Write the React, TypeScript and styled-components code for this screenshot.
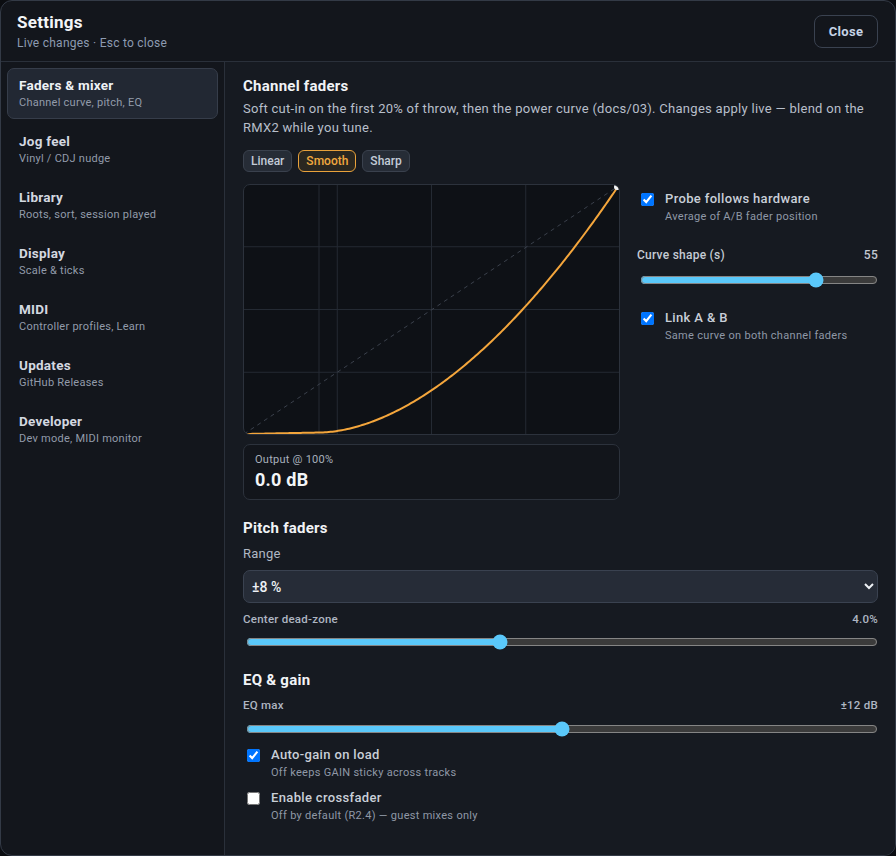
import React from "react";
import styled, { createGlobalStyle } from "styled-components";

const FONT = `"Roboto", "Noto Sans", "DejaVu Sans", sans-serif`;

const Global = createGlobalStyle`
  html, body { margin: 0; padding: 0; background: #0b0d11; }
  body { font-family: ${FONT}; -webkit-font-smoothing: antialiased; letter-spacing: 0.25px; }
  * { box-sizing: border-box; }
`;

const Modal = styled.div`
  width: 896px;
  height: 856px;
  display: flex;
  flex-direction: column;
  background: #13161c;
  border: 1px solid #333a46;
  border-radius: 12px;
  overflow: hidden;
  color: #e8ebf0;
`;

const Header = styled.header`
  height: 61px;
  flex: none;
  display: flex;
  align-items: center;
  justify-content: space-between;
  padding: 0 17px 0 16px;
  border-bottom: 1px solid #2a303a;
`;

const TitleBlock = styled.div`
  display: flex;
  flex-direction: column;
`;

const Title = styled.h1`
  margin: 0;
  font-size: 17px;
  line-height: 20px;
  font-weight: 700;
  color: #f3f5f8;
`;

const Subtitle = styled.div`
  margin-top: 4px;
  font-size: 12px;
  line-height: 15px;
  color: #8d9bb1;
`;

const CloseButton = styled.button`
  width: 64px;
  height: 33px;
  background: transparent;
  border: 1px solid #3a4250;
  border-radius: 8px;
  color: #c6d3e6;
  font-family: ${FONT};
  font-size: 13px;
  font-weight: 700;
  letter-spacing: 0.3px;
  cursor: pointer;
`;

const Body = styled.div`
  flex: 1;
  display: flex;
  min-height: 0;
`;

const Sidebar = styled.nav`
  width: 224px;
  flex: none;
  padding: 6px;
  border-right: 1px solid #2a303a;
  display: flex;
  flex-direction: column;
  gap: 5px;
`;

const NavItem = styled.div<{ $active?: boolean }>`
  padding: 8px 11px;
  border-radius: 7px;
  border: 1px solid ${(p) => (p.$active ? "#363d4a" : "transparent")};
  background: ${(p) => (p.$active ? "#222833" : "transparent")};
`;

const NavTitle = styled.div<{ $active?: boolean }>`
  font-size: 13.5px;
  line-height: 17px;
  font-weight: 700;
  color: ${(p) => (p.$active ? "#eef1f5" : "#d3d8e0")};
`;

const NavSub = styled.div`
  margin-top: 1px;
  font-size: 11px;
  line-height: 15px;
  color: #929baa;
`;

const Content = styled.main`
  flex: 1;
  min-width: 0;
  padding: 14px 17px 0 18px;
  background: #161a21;
  display: flex;
  flex-direction: column;
`;

const SectionTitle = styled.h2<{ $mt?: number }>`
  margin: ${(p) => p.$mt ?? 0}px 0 0;
  font-size: 15px;
  line-height: 20px;
  font-weight: 700;
  color: #f1f3f6;
`;

const Description = styled.p`
  margin: 3px 0 0;
  font-size: 13px;
  line-height: 19px;
  letter-spacing: 0.28px;
  color: #b8bfca;
`;

const Segmented = styled.div`
  display: flex;
  gap: 6px;
  margin-top: 13px;
`;

const SegButton = styled.button<{ $active?: boolean }>`
  height: 22px;
  padding: 0 7px;
  border-radius: 6px;
  font-family: ${FONT};
  font-size: 12px;
  font-weight: 500;
  letter-spacing: 0;
  border: 1px solid ${(p) => (p.$active ? "#e9a23b" : "#3a414d")};
  background: ${(p) => (p.$active ? "#2a2720" : "#262c36")};
  color: ${(p) => (p.$active ? "#f2a93f" : "#c3cbd7")};
`;

const CurveGrid = styled.div`
  display: grid;
  grid-template-columns: 377px 1fr;
  column-gap: 17px;
  margin-top: 12px;
`;

const ChartColumn = styled.div`
  display: flex;
  flex-direction: column;
  gap: 9px;
`;

const ChartBox = styled.div`
  height: 251px;
  border: 1px solid #2c323c;
  border-radius: 7px;
  background: #0e1116;
  overflow: hidden;
  svg { display: block; }
`;

const OutputBox = styled.div`
  height: 56px;
  border: 1px solid #2c323c;
  border-radius: 7px;
  background: #12151b;
  padding: 7px 11px;
`;

const OutputLabel = styled.div`
  font-size: 11px;
  line-height: 15px;
  color: #a8b0bc;
`;

const OutputValue = styled.div`
  margin-top: 2px;
  font-size: 18px;
  line-height: 22px;
  font-weight: 700;
  color: #f3f5f8;
`;

const SideColumn = styled.div`
  display: flex;
  flex-direction: column;
  padding-top: 6px;
`;

const CheckRow = styled.label<{ $mt?: number }>`
  display: flex;
  align-items: flex-start;
  gap: 11px;
  margin-top: ${(p) => p.$mt ?? 0}px;
`;

const Check = styled.input.attrs({ type: "checkbox" })`
  width: 13px;
  height: 13px;
  margin: 3px 0 0 4px;
  flex: none;
`;

const CheckText = styled.div`
  display: flex;
  flex-direction: column;
`;

const CheckLabel = styled.div`
  font-size: 13px;
  line-height: 17px;
  font-weight: 500;
  letter-spacing: 0.35px;
  color: #c9cfd8;
`;

const CheckSub = styled.div`
  margin-top: 2px;
  font-size: 11px;
  line-height: 15px;
  letter-spacing: 0.3px;
  color: #8f98a6;
`;

const ValueRow = styled.div<{ $mt?: number }>`
  display: flex;
  justify-content: space-between;
  margin-top: ${(p) => p.$mt ?? 0}px;
  font-size: 11.5px;
  line-height: 16px;
  font-weight: 500;
  color: #aeb6c2;
`;

const StrongValueRow = styled(ValueRow)`
  font-size: 12px;
  color: #c5cbd4;
`;

const Range = styled.input.attrs({ type: "range" })<{ $mt?: number }>`
  display: block;
  width: calc(100% - 3px);
  height: 16px;
  margin: ${(p) => p.$mt ?? 0}px 0 0 3px;
  color-scheme: dark;
  accent-color: #5ac8fa;
`;

const FieldLabel = styled.div`
  margin-top: 7px;
  font-size: 13px;
  line-height: 18px;
  color: #b0b8c4;
`;

const Select = styled.select`
  margin-top: 7px;
  width: 100%;
  height: 33px;
  padding: 0 4px;
  border: 1px solid #3a4250;
  border-radius: 7px;
  background: #262c37;
  color: #eef1f5;
  font-family: ${FONT};
  font-size: 14px;
  font-weight: 500;
  color-scheme: dark;
`;

const navItems = [
  { title: "Faders & mixer", sub: "Channel curve, pitch, EQ" },
  { title: "Jog feel", sub: "Vinyl / CDJ nudge" },
  { title: "Library", sub: "Roots, sort, session played" },
  { title: "Display", sub: "Scale & ticks" },
  { title: "MIDI", sub: "Controller profiles, Learn" },
  { title: "Updates", sub: "GitHub Releases" },
  { title: "Developer", sub: "Dev mode, MIDI monitor" },
];

const W = 377;
const H = 251;

function buildCurve(): string {
  const pts: string[] = [];
  for (let i = 0; i <= 200; i++) {
    const x = i / 200;
    let v: number;
    if (x <= 0.2) {
      v = 0.006 * (x / 0.2);
    } else {
      const t = (x - 0.2) / 0.8;
      v = 0.006 + 0.994 * Math.pow(t, 1.8);
    }
    const px = 1 + x * (W - 5);
    const py = H - 2 - v * (H - 5);
    pts.push(`${i === 0 ? "M" : "L"}${px.toFixed(2)},${py.toFixed(2)}`);
  }
  return pts.join(" ");
}

const Chart: React.FC = () => {
  const vx = [76, W / 4, W / 2, (W * 3) / 4];
  const hy = [H / 4, H / 2, (H * 3) / 4];
  return (
    <svg width={W - 2} height={H - 2} viewBox={`0 0 ${W - 2} ${H - 2}`}>
      {vx.map((x) => (
        <line key={`v${x}`} x1={x - 1} y1={0} x2={x - 1} y2={H} stroke="#242a33" strokeWidth={1} />
      ))}
      {hy.map((y) => (
        <line key={`h${y}`} x1={0} y1={y - 1} x2={W} y2={y - 1} stroke="#242a33" strokeWidth={1} />
      ))}
      <line x1={0} y1={H - 2} x2={W - 4} y2={2} stroke="#3b414c" strokeWidth={1} strokeDasharray="4 4" />
      <path d={buildCurve()} fill="none" stroke="#f4a63c" strokeWidth={2} strokeLinecap="round" />
      <circle cx={W - 4} cy={2} r={3} fill="#f1f3f6" />
    </svg>
  );
};

export default function App() {
  return (
    <>
      <Global />
      <Modal>
        <Header>
          <TitleBlock>
            <Title>Settings</Title>
            <Subtitle>Live changes · Esc to close</Subtitle>
          </TitleBlock>
          <CloseButton>Close</CloseButton>
        </Header>
        <Body>
          <Sidebar>
            {navItems.map((n, i) => (
              <NavItem key={n.title} $active={i === 0}>
                <NavTitle $active={i === 0}>{n.title}</NavTitle>
                <NavSub>{n.sub}</NavSub>
              </NavItem>
            ))}
          </Sidebar>
          <Content>
            <SectionTitle>Channel faders</SectionTitle>
            <Description>
              Soft cut-in on the first 20% of throw, then the power curve (docs/03). Changes apply live — blend on the
              RMX2 while you tune.
            </Description>
            <Segmented>
              <SegButton>Linear</SegButton>
              <SegButton $active>Smooth</SegButton>
              <SegButton>Sharp</SegButton>
            </Segmented>
            <CurveGrid>
              <ChartColumn>
                <ChartBox>
                  <Chart />
                </ChartBox>
                <OutputBox>
                  <OutputLabel>Output @ 100%</OutputLabel>
                  <OutputValue>0.0 dB</OutputValue>
                </OutputBox>
              </ChartColumn>
              <SideColumn>
                <CheckRow>
                  <Check defaultChecked />
                  <CheckText>
                    <CheckLabel>Probe follows hardware</CheckLabel>
                    <CheckSub>Average of A/B fader position</CheckSub>
                  </CheckText>
                </CheckRow>
                <StrongValueRow $mt={23}>
                  <span>Curve shape (s)</span>
                  <span>55</span>
                </StrongValueRow>
                <Range $mt={9} min={10} max={70} defaultValue={55.5} step={0.5} />
                <CheckRow $mt={21}>
                  <Check defaultChecked />
                  <CheckText>
                    <CheckLabel>Link A &amp; B</CheckLabel>
                    <CheckSub>Same curve on both channel faders</CheckSub>
                  </CheckText>
                </CheckRow>
              </SideColumn>
            </CurveGrid>

            <SectionTitle $mt={18}>Pitch faders</SectionTitle>
            <FieldLabel>Range</FieldLabel>
            <Select defaultValue="8">
              <option value="6">±6 %</option>
              <option value="8">±8 %</option>
              <option value="10">±10 %</option>
              <option value="16">±16 %</option>
            </Select>
            <ValueRow $mt={8}>
              <span>Center dead-zone</span>
              <span>4.0%</span>
            </ValueRow>
            <Range $mt={7} min={0} max={10} step={0.1} defaultValue={4} />

            <SectionTitle $mt={20}>EQ &amp; gain</SectionTitle>
            <ValueRow $mt={7}>
              <span>EQ max</span>
              <span>±12 dB</span>
            </ValueRow>
            <Range $mt={8} min={6} max={18} defaultValue={12} />
            <CheckRow $mt={9}>
              <Check defaultChecked />
              <CheckText>
                <CheckLabel>Auto-gain on load</CheckLabel>
                <CheckSub>Off keeps GAIN sticky across tracks</CheckSub>
              </CheckText>
            </CheckRow>
            <CheckRow $mt={9}>
              <Check />
              <CheckText>
                <CheckLabel>Enable crossfader</CheckLabel>
                <CheckSub>Off by default (R2.4) — guest mixes only</CheckSub>
              </CheckText>
            </CheckRow>
          </Content>
        </Body>
      </Modal>
    </>
  );
}
